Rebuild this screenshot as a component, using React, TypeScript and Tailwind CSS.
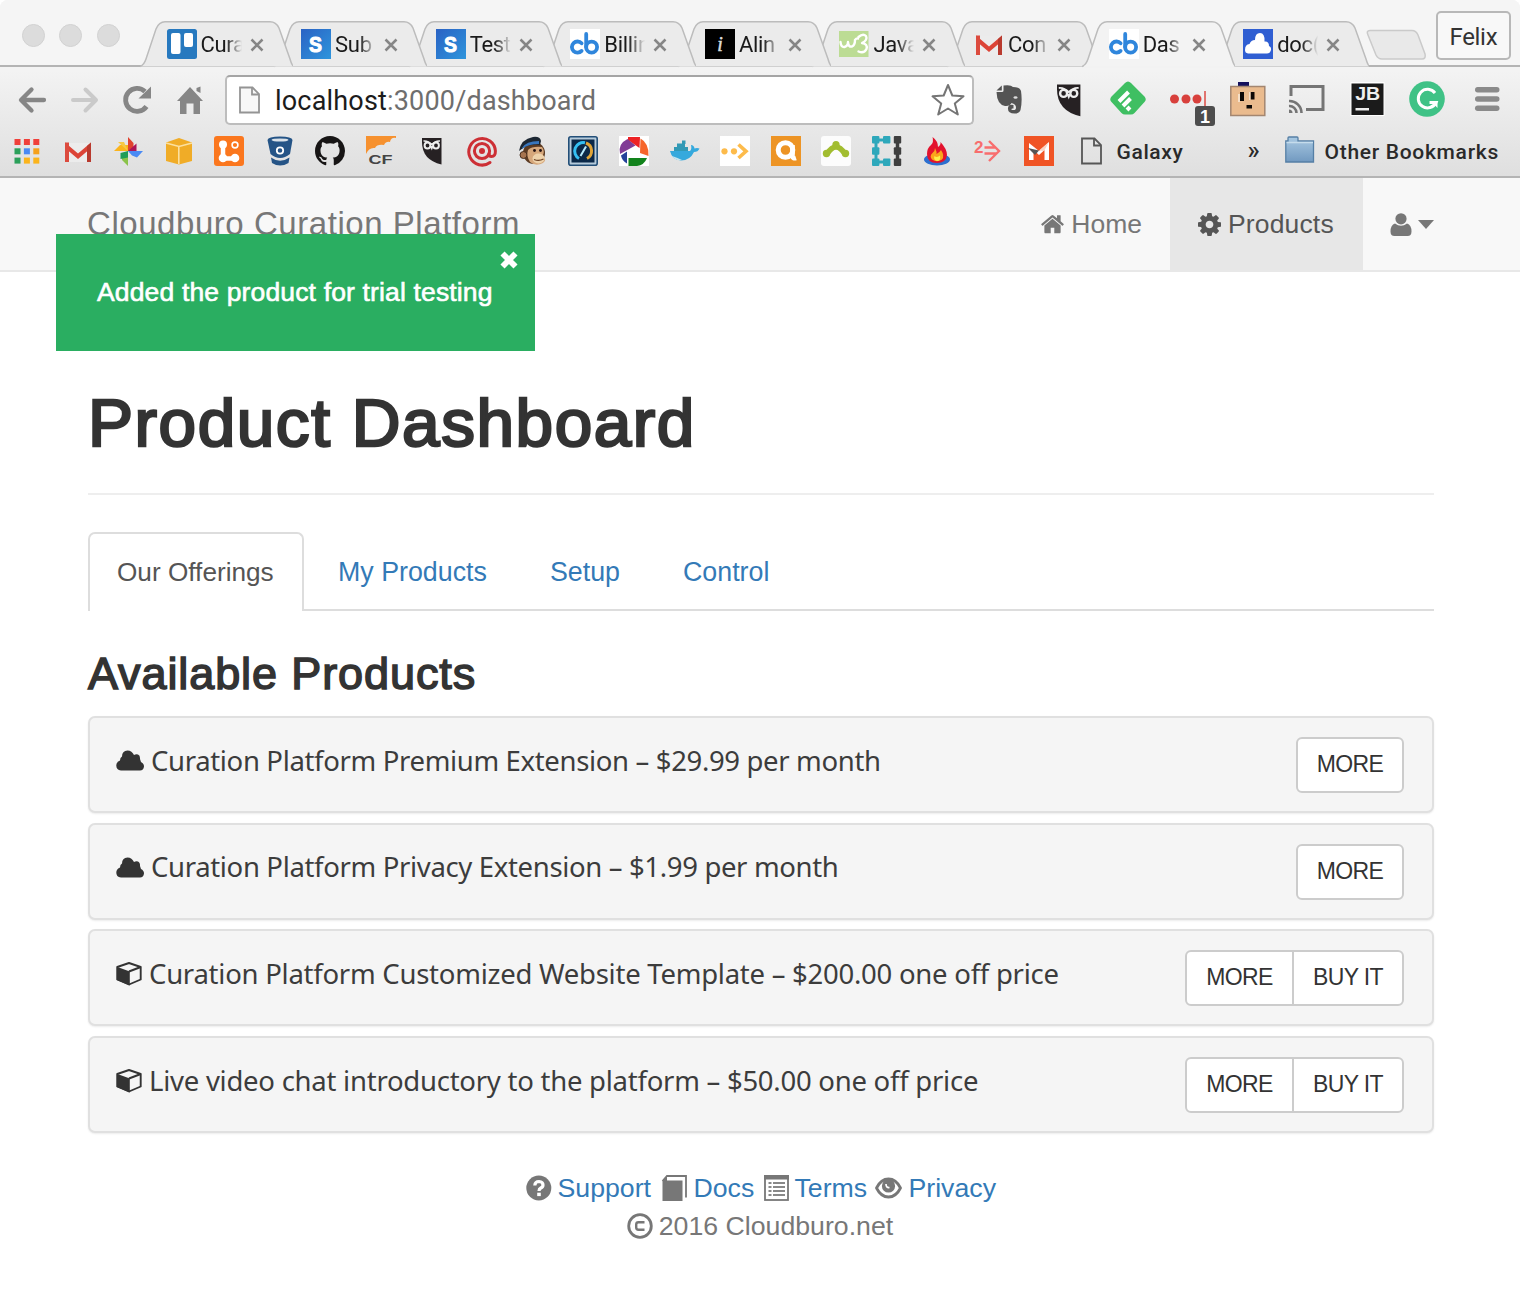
import React from "react";

type SvgProps = { children: React.ReactNode; box?: string; className?: string };

function Glyph({ children, box = "0 0 30 30", className = "h-[30px] w-[30px]" }: SvgProps) {
  return (
    <svg viewBox={box} className={`block shrink-0 overflow-visible ${className}`}>
      {children}
    </svg>
  );
}

/* ---------- favicons and bookmark logos, each on a 30 x 30 grid ---------- */

const Trello = () => (
  <Glyph>
    <rect width="30" height="30" rx="2.5" fill="#2779bf" />
    <rect x="4" y="4" width="9.5" height="21" rx="2" fill="#fff" />
    <rect x="17" y="4" width="9" height="14" rx="2" fill="#fff" />
  </Glyph>
);

const StripeS = () => (
  <Glyph>
    <defs>
      <linearGradient id="stripe" x1="0" y1="0" x2="1" y2="1">
        <stop offset="0" stopColor="#2a62c4" />
        <stop offset="1" stopColor="#2e95dc" />
      </linearGradient>
    </defs>
    <rect width="30" height="30" fill="url(#stripe)" />
    <text x="14.500" y="22.500" textAnchor="middle" textLength="13" lengthAdjust="spacingAndGlyphs" fontFamily="Liberation Sans, sans-serif" fontWeight="700" fontSize="22" fill="#fff" stroke="#fff" strokeWidth="1">
      S
    </text>
  </Glyph>
);

const Cb = () => (
  <Glyph>
    <rect width="30" height="30" fill="#fff" />
    <g fill="none" stroke="#2f86dc" strokeWidth="3.8" strokeLinecap="round">
      <path d="M11.6 14.3 A5.6 5.6 0 1 0 11.6 21.9" />
      <path d="M16.2 5V18" />
      <circle cx="21.6" cy="18.1" r="5.5" />
    </g>
  </Glyph>
);

const InfoBlack = () => (
  <Glyph>
    <rect width="30" height="30" fill="#000" />
    <text x="15" y="21.500" textAnchor="middle" fontFamily="Liberation Serif, serif" fontStyle="italic" fontSize="20" fill="#ddd" stroke="#ddd" strokeWidth=".5">
      i
    </text>
  </Glyph>
);

const W3 = () => (
  <Glyph>
    <rect y="2" width="29.5" height="26" fill="#bcdc94" />
    <g fill="none" stroke="#fff" strokeWidth="2.4" strokeLinecap="round" strokeLinejoin="round">
      <path d="M1.500 13 Q2 18.500 5.500 18 Q9 17 9 13 Q9.500 18.500 13 17.500 Q16 16 16 11 Q17.500 9 19 9.500" />
      <path d="M19.500 8 Q24 4 27 7 Q29 11 23 14 Q29 15 27.500 20 Q25 25 19.500 22.500" />
    </g>
  </Glyph>
);

const Gmail = () => (
  <Glyph>
    <path d="M2 7 H28 V26 H2Z" fill="#ececec" />
    <path d="M2 6.500 L15 17.500 L28 6.500 V12 L15 23 L2 12Z" fill="#dc4437" />
    <path d="M2 6.500 H6 V26 H2Z" fill="#dc4b3e" />
    <path d="M24 10 L28 6.500 V26 H24Z" fill="#b93a2e" />
  </Glyph>
);

const CloudFav = () => (
  <Glyph>
    <rect width="30" height="30" fill="#2f5ed2" />
    <path d="M5 24.500 Q2 24 2 21 Q2 15.500 6.500 15 Q8 11 12 11 Q12 4 17 4 Q22 4 21.500 12.500 Q26 12 26 17 Q28.500 18 28 21 Q27 24.500 24 24.500Z" fill="#fff" />
  </Glyph>
);

const Apps = () => {
  const colors = ["#f0403a", "#f0403a", "#f0403a", "#2ba05a", "#4a8af4", "#f5a11c", "#2ba05a", "#fbb41c", "#fbb41c"];
  return (
    <Glyph>
      {colors.map((c, i) => (
        <rect key={i} x={2.5 + (i % 3) * 9.4} y={3 + Math.floor(i / 3) * 9.3} width="6" height="6" fill={c} />
      ))}
    </Glyph>
  );
};

const Photos = () => (
  <Glyph>
    <path d="M15 1 L20.500 7 V15 H15Z" fill="#e0432f" />
    <path d="M15 15 L23.500 7.500 V15Z" fill="#ad1457" />
    <path d="M1 15 L7 9 L15 9 V15Z" fill="#fbb41c" />
    <path d="M5 6 H11 L15 15Z" fill="#f6c945" />
    <path d="M15 15 H30 L24 21.500 L19 19.500Z" fill="#4a8af4" />
    <path d="M15 15 V30 L9 24 V20Z" fill="#8bc34a" />
    <path d="M15 15 V21.500 L7.500 23 V17Z" fill="#1f9d58" />
  </Glyph>
);

const AwsCube = () => (
  <Glyph>
    <path d="M2 6.500 L15 2 L28 6.500 V25 L15 28.500 L2 25Z" fill="#f0ac27" />
    <path d="M2 7 L15 10.500 L28 7 M14.800 10.500 V28" stroke="#fbe0a0" strokeWidth="1.600" fill="none" />
  </Glyph>
);

const OrangeNodes = () => (
  <Glyph>
    <rect width="30" height="30" rx="3" fill="#fb771e" />
    <g stroke="#fff" strokeWidth="4.500">
      <path d="M9 9 V22.500 H21" fill="none" />
    </g>
    <circle cx="9" cy="8.500" r="4" fill="#fff" />
    <circle cx="9" cy="22" r="4.300" fill="#fff" />
    <circle cx="21" cy="22" r="4.300" fill="#fff" />
    <circle cx="21" cy="9" r="2.900" fill="none" stroke="#fff" strokeWidth="1.600" />
  </Glyph>
);

const Bucket = () => (
  <Glyph>
    <path d="M2.500 4 Q3 .5 15 .5 Q27 .5 27.500 4 L25 18 Q15 26 5.500 18Z" fill="#255486" />
    <ellipse cx="15" cy="4" rx="8.500" ry="1.600" fill="#d9e1e8" />
    <path d="M6 21.500 Q15 28 24.500 21.500 L23.500 27 Q15 32 7 27Z" fill="#255486" />
    <circle cx="15" cy="14.500" r="3.200" fill="#255486" stroke="#fff" strokeWidth="1.800" />
  </Glyph>
);

const GitHub = () => (
  <Glyph box="0 0 16 16">
    <path
      fill="#171515"
      d="M8 0C3.580 0 0 3.580 0 8c0 3.540 2.290 6.530 5.470 7.590.4.070.55-.17.55-.38 0-.19-.01-.82-.01-1.490-2.010.37-2.530-.49-2.690-.94-.09-.23-.48-.94-.82-1.130-.28-.15-.68-.52-.01-.53.63-.01 1.080.58 1.230.82.72 1.210 1.870.87 2.330.66.07-.52.28-.87.51-1.070-1.780-.2-3.640-.89-3.640-3.950 0-.87.31-1.590.82-2.150-.08-.2-.36-1.020.08-2.120 0 0 .67-.21 2.200.82.64-.18 1.320-.27 2-.27s1.360.09 2 .27c1.530-1.040 2.200-.82 2.200-.82.44 1.100.16 1.920.08 2.120.51.56.82 1.270.82 2.150 0 3.070-1.870 3.750-3.650 3.950.29.25.54.73.54 1.480 0 1.070-.01 1.930-.01 2.200 0 .21.15.46.55.38A8.010 8.010 0 0 0 16 8c0-4.420-3.580-8-8-8z"
    />
  </Glyph>
);

const Cloudflare = () => (
  <Glyph>
    <path d="M0 0 H30 V2 Q25 1 24 6 Q20 5 18 9 Q11 8 9 12 Q3 11 0 18Z" fill="#f6912f" />
    <text x="2.500" y="28" textLength="24" lengthAdjust="spacingAndGlyphs" fontFamily="Liberation Sans, sans-serif" fontWeight="700" fontSize="13.500" fill="#444">
      CF
    </text>
  </Glyph>
);

const Owl = ({ className }: { className?: string }) => (
  <Glyph className={className}>
    <path d="M5 2 H24.500 V28.500 Q5 24 5 6Z" fill="#262123" />
    <path d="M6.500 5 Q11 4.500 14.800 8.500 Q18.500 4.500 23 5" fill="none" stroke="#eee" strokeWidth="1.500" />
    <circle cx="10.500" cy="9.500" r="2.900" fill="#262123" stroke="#eee" strokeWidth="2" />
    <circle cx="19" cy="9.500" r="2.900" fill="#262123" stroke="#eee" strokeWidth="2" />
    <path d="M13 10 H16.600 L14.800 14.500Z" fill="#eee" />
  </Glyph>
);

const AtRed = () => (
  <Glyph>
    <g fill="none" stroke="#cd2f35" strokeWidth="3" strokeLinecap="round">
      <path d="M23 26.500 A13.300 13.300 0 1 1 28.400 15 Q28.500 20.500 24.500 20.500 Q22 20.500 22 17.500" />
      <circle cx="15" cy="15" r="7.600" />
    </g>
    <circle cx="15" cy="15" r="3" fill="#cd2f35" />
  </Glyph>
);

const Monkey = () => (
  <Glyph>
    <circle cx="16" cy="17" r="11" fill="#5b3a22" />
    <circle cx="5.500" cy="19" r="3.500" fill="#a7744f" stroke="#4a2f1d" />
    <path d="M10 14 Q14 10 24 11 Q27 15 25 19 Q29 24 25 27 Q18 31 12 26 Q8 20 10 14Z" fill="#d6a77b" />
    <ellipse cx="20.500" cy="22.500" rx="6" ry="5" fill="#eed2ab" />
    <path d="M16 23.500 Q21 25.500 25.500 23" stroke="#6b4023" strokeWidth="1.200" fill="none" />
    <circle cx="16.500" cy="14.500" r="1.400" fill="#211" />
    <circle cx="22.500" cy="14.500" r="1.400" fill="#211" />
    <path d="M1 15 Q3 3 15 1 Q22 0 23 5 L22 9 Q11 7 1 15Z" fill="#1d2733" />
    <path d="M4 12 Q8 5 21 5 L21 8 Q10 8 4 13Z" fill="#3976bd" />
  </Glyph>
);

const Gauge = () => (
  <Glyph>
    <rect x=".8" y=".8" width="28.400" height="28.400" rx="2" fill="#b5cada" stroke="#234f78" strokeWidth="1.600" />
    <rect x="3.500" y="3.500" width="23" height="23" fill="#0b2848" />
    <path d="M11 22.500 A8.500 8.500 0 0 1 17 6.800" fill="none" stroke="#35bff2" strokeWidth="3" />
    <path d="M18 7 A8.500 8.500 0 0 1 19 22.500" fill="none" stroke="#e0a437" strokeWidth="3" />
    <path d="M12.500 20 L18 10.500" stroke="#b9ecff" strokeWidth="2" />
  </Glyph>
);

const Picasa = () => (
  <Glyph>
    <rect width="30" height="30" fill="#fff" />
    <path d="M9 1 L21 1 L20.500 12 L9 4Z" fill="#ed2224" />
    <path d="M21.500 2.500 Q30 7 29.500 20 L21 17Z" fill="#f6662b" />
    <path d="M8.500 3 L16.500 9.500 L1 18 Q-1.500 8 8.500 3Z" fill="#813c96" />
    <path d="M2 19.500 L8 15.500 V27.500 Q3 25 2 19.500Z" fill="#23419a" />
    <path d="M9.500 22 H28 Q25 29.500 18 30 H9.500Z" fill="#12831c" />
  </Glyph>
);

const Docker = () => (
  <Glyph>
    <path d="M0 15 H20 Q22 13 21 9 Q24 9 24.500 12.500 Q27 11.500 29.500 12.500 Q28 16 24 16 Q20 24.500 11 24.500 Q2 24 0 15Z" fill="#35a9dd" />
    <path d="M4 11 H18 V15 H4Z M7 7.500 H15 V11 H7Z M12 4.500 H15.500 V8 H12Z" fill="#3199b5" />
    <path d="M2 20 Q8 22 12 24 Q5 25 2 20Z" fill="#c7e6ef" />
  </Glyph>
);

const DotsArrow = () => (
  <Glyph>
    <rect width="30" height="30" fill="#fff" />
    <circle cx="4.500" cy="15.300" r="3.100" fill="#fdbb4b" />
    <circle cx="14" cy="15.300" r="3.100" fill="#fdbb4b" />
    <path d="M18.500 8.500 L26 15.300 L18.500 22" fill="none" stroke="#fdbb4b" strokeWidth="3.600" />
  </Glyph>
);

const OrangeA = () => (
  <Glyph>
    <rect width="30" height="30" fill="#ed9425" />
    <circle cx="14.500" cy="14" r="7.300" fill="none" stroke="#fff" strokeWidth="5" />
    <path d="M21.500 9 V20.500 Q22 23 25 22" fill="none" stroke="#fff" strokeWidth="4.600" />
  </Glyph>
);

const GreenArc = () => (
  <Glyph>
    <rect width="30" height="30" rx="3" fill="#fcfcfc" />
    <path d="M6 18 Q15 4 24 18" fill="none" stroke="#a2bd30" strokeWidth="5.500" />
    <circle cx="5.500" cy="17.500" r="3.700" fill="#a2bd30" />
    <circle cx="24.500" cy="17.500" r="3.700" fill="#a2bd30" />
    <circle cx="15" cy="8.500" r="3.600" fill="#a2bd30" />
  </Glyph>
);

const Boxes = () => (
  <Glyph>
    <path d="M4 4 H16 M4 4 V26 H16" stroke="#2ea8bb" strokeWidth="3" fill="none" />
    <path d="M25.500 3 V27" stroke="#3f3f3f" strokeWidth="3.500" />
    {[0, 11.3, 22.6].map((y) => (
      <g key={y}>
        <rect x="0" y={y} width="7.400" height="7.400" rx="1" fill="#2ea8bb" />
        <rect x="21.800" y={y} width="7.400" height="7.400" rx="1" fill="#3f3f3f" />
      </g>
    ))}
    <rect x="11" y="0" width="7.400" height="7.400" rx="1" fill="#2ea8bb" />
    <rect x="11" y="22.600" width="7.400" height="7.400" rx="1" fill="#2ea8bb" />
  </Glyph>
);

const Flame = () => (
  <Glyph>
    <ellipse cx="15" cy="23.500" rx="13" ry="6" fill="#2d6fcf" />
    <path d="M10.500 1 Q16 5 16 11 Q19 9 18.500 6 Q25 13 25 19 Q24 27 15 27 Q5 27 5 18 Q5 12 9 9 Q12 6 10.500 1Z" fill="#e3122d" />
    <path d="M13 12 Q15 16 14.500 18 Q18 16 19 14 Q23 20 20 23.500 Q15 27 10 23.500 Q7 20 10.500 17 Q13 15 13 12Z" fill="#fba51c" />
    <path d="M12.500 20 Q15 22 18 19.500 Q19 25 15 25 Q11 24 12.500 20Z" fill="#fdee49" />
  </Glyph>
);

const TwoArrow = () => (
  <Glyph>
    <text x="1" y="17" fontFamily="Liberation Sans, sans-serif" fontWeight="700" fontSize="17" fill="#f86d6d">
      2
    </text>
    <path d="M11.500 11.500 H22 M11.500 17.500 H23 M16 5 L26 15 L16 25" fill="none" stroke="#f86d6d" strokeWidth="2.400" />
  </Glyph>
);

const OrangeM = () => (
  <Glyph>
    <rect width="30" height="30" fill="#f05425" />
    <path d="M5 24 V7 L15 15 L25 6 V24 H20.500 V14 L15 19 L9.500 14 V24Z" fill="#fff" />
    <path d="M4 12 L15 14.500 L11 19Z" fill="#555" />
    <path d="M15 14.500 L25 6 L20 15Z" fill="#fbd2c2" />
  </Glyph>
);

const FileOutline = ({ light = false }: { light?: boolean }) => (
  <Glyph>
    <path d="M6 2.500 H18.500 L25 9 V27.500 H6Z" fill={light ? "#f8f8f8" : "none"} stroke={light ? "#949494" : "#565656"} strokeWidth="1.800" />
    <path d="M18 3 V9.500 H24.500" fill="none" stroke={light ? "#949494" : "#565656"} strokeWidth="1.800" />
  </Glyph>
);

const Folder = () => (
  <Glyph>
    <defs>
      <linearGradient id="folder" x1="0" y1="0" x2="0" y2="1">
        <stop offset="0" stopColor="#a9c9e2" />
        <stop offset="1" stopColor="#7199c0" />
      </linearGradient>
    </defs>
    <path d="M3 5 V2 Q3 1 4 1 H12 Q13 1 13 2 V5 H28.500 V26 H.8 V5Z" fill="url(#folder)" stroke="#557fa5" strokeWidth="1.300" />
    <path d="M1.500 6.500 H28" stroke="#c5dcec" strokeWidth="1.300" />
  </Glyph>
);

/* ---------- toolbar icons, each on a 36 x 36 grid ---------- */

const big = "h-[36px] w-[36px]";
const box36 = "0 0 36 36";

const Evernote = () => (
  <Glyph box={box36} className={big}>
    <path d="M5.500 11 H11 Q12.500 11 12.500 9.500 V4.500 Q20 3.500 22 6 Q29 6 30 10 Q31.500 20 29.500 29 Q28.500 32.500 23.500 32.500 Q16.500 32.500 17 27 Q17.500 23 22.500 24 V27.500 Q20 27 20.500 28.800 Q25 30 25 26.500 Q25 23 20.500 22 Q19 25.500 14 25 Q6 23.500 5.500 11Z" fill="#545454" />
    <path d="M10.800 4.500 V9.500 H5.500Z" fill="#545454" />
    <ellipse cx="24.500" cy="16.500" rx="2" ry="1.300" fill="#ddd" />
  </Glyph>
);

const Feedly = () => (
  <Glyph box={box36} className={big}>
    <path d="M15 2 Q18 -1 21 2 L34.500 15.500 Q37 18.500 34.500 21 L24.500 32 Q23 33.500 21 33.500 H15 Q13 33.500 11.500 32 L1.500 21 Q-1 18.500 1.500 15.500Z" fill="#3fbf62" />
    <path d="M9 20.500 L18.500 11 M13 25 L20.500 17.500 M17 29 L20 26" stroke="#fff" strokeWidth="4" />
  </Glyph>
);

const LastPass = () => (
  <Glyph box={box36} className={big}>
    <circle cx="4.500" cy="18" r="4.500" fill="#d8403c" />
    <circle cx="16" cy="18" r="4.500" fill="#d8403c" />
    <circle cx="27" cy="18" r="4.500" fill="#d8403c" />
    <rect x="34" y="10" width="2" height="19" fill="#e0746f" />
    <rect x="25" y="25" width="20" height="20" rx="3" fill="#4d4d4d" />
    <text x="35" y="41.500" textAnchor="middle" fontFamily="Liberation Sans, sans-serif" fontWeight="700" fontSize="18" fill="#fff">
      1
    </text>
  </Glyph>
);

const BoxFace = () => (
  <Glyph box={box36} className={big}>
    <rect x="8" y="1" width="11" height="6" fill="#15105c" />
    <rect x=".8" y="5.500" width="34" height="29" fill="#eabb8e" stroke="#a38670" strokeWidth="1.500" />
    <path d="M10 11 H14 V20 H10Z M20.500 11 H24.500 V18.500 H20.500Z M16.500 24 H22 V27.500 H16.500Z" fill="#0c0806" />
    <path d="M8 13 H10 V21 H8Z M19 11 H20.500 V19 H19Z" fill="#f5dfc8" />
  </Glyph>
);

const Cast = () => (
  <Glyph box={box36} className={big}>
    <path d="M2 15 V5.500 H34 V28.500 H17" fill="none" stroke="#757575" strokeWidth="3" />
    <g fill="none" stroke="#757575" strokeWidth="2.600">
      <path d="M0 20 A12 12 0 0 1 12.500 32" />
      <path d="M0 25 A7 7 0 0 1 7.500 32" />
    </g>
    <path d="M0 28.500 A3.500 3.500 0 0 1 3.500 32 H0Z" fill="#757575" />
  </Glyph>
);

const JetBrains = () => (
  <Glyph box={box36} className={big}>
    <rect x="1.500" y="1" width="34" height="34" fill="#fff" />
    <rect x="2.500" y="2.500" width="32" height="31.500" fill="#1b1b1b" />
    <text x="18.700" y="19" textAnchor="middle" textLength="25" lengthAdjust="spacingAndGlyphs" fontFamily="Liberation Sans, sans-serif" fontWeight="700" fontSize="18.500" fill="#eee">
      JB
    </text>
    <rect x="6.500" y="27" width="13.500" height="2.500" fill="#eee" />
  </Glyph>
);

const Grammarly = () => (
  <Glyph box={box36} className={big}>
    <circle cx="18" cy="18" r="17.800" fill="#3fc286" />
    <path d="M26 12 A9.300 9.300 0 1 0 27 21.500 H20.500" fill="none" stroke="#fff" strokeWidth="3" />
    <path d="M22.500 20.500 H28.500 V27Z" fill="#fff" />
  </Glyph>
);

const Burger = () => (
  <Glyph box={box36} className={big}>
    {[6, 15.2, 24.5].map((y) => (
      <rect key={y} x="6" y={y} width="24.500" height="5.500" rx="2.700" fill="#8a8a8a" />
    ))}
  </Glyph>
);

const BackArrow = () => (
  <Glyph className="h-[30px] w-[30px]">
    <path d="M14.500 4.500 L4 15 L14.500 25.500 M4.500 15 H27" fill="none" stroke="#868686" strokeWidth="4.300" strokeLinecap="round" strokeLinejoin="round" />
  </Glyph>
);

const ForwardArrow = () => (
  <Glyph className="h-[30px] w-[30px]">
    <path d="M15.500 4.500 L26 15 L15.500 25.500 M25 15 H3" fill="none" stroke="#cacaca" strokeWidth="4" strokeLinecap="round" strokeLinejoin="round" />
  </Glyph>
);

const Reload = () => (
  <Glyph className="h-[30px] w-[30px]">
    <path d="M24.500 21.500 A11.500 11.500 0 1 1 23 6.500" fill="none" stroke="#868686" strokeWidth="4.800" />
    <path d="M29 1.500 V13.500 H16.500Z" fill="#868686" />
  </Glyph>
);

const ToolbarHome = () => (
  <Glyph className="h-[30px] w-[30px]">
    <path d="M2 16 L15 2 L28 16 H25 V29 H18.500 V18.500 H11.500 V29 H5 V16Z" fill="#868686" />
    <path d="M21.500 3 L25.500 1.500 V8 L21.500 6Z" fill="#868686" />
  </Glyph>
);

/* ---------- page icons ---------- */

const HomeIcon = () => (
  <Glyph box="80 220 1632 1330" className="h-[20px] w-[23px]">
    <path
      fill="#777"
      d="M1472 992v480q0 26-19 45t-45 19h-384v-384h-256v384h-384q-26 0-45-19t-19-45v-480q0-1 .5-3t.5-3l575-474 575 474q1 2 1 6zm223-69l-62 74q-8 9-21 11h-3q-13 0-21-7l-692-577-692 577q-12 8-24 7-13-2-21-11l-62-74q-8-10-7-23.500t11-21.500l719-599q32-26 76-26t76 26l244 204v-195q0-14 9-23t23-9h192q14 0 23 9t9 23v408l219 182q10 8 11 21.500t-7 23.500z"
    />
  </Glyph>
);

const GearIcon = () => (
  <Glyph box="128 128 1536 1536" className="h-[23px] w-[23px]">
    <path
      fill="#555"
      d="M1152 896q0-106-75-181t-181-75-181 75-75 181 75 181 181 75 181-75 75-181zm512-109v222q0 12-8 23t-20 13l-185 28q-19 54-39 91 35 50 107 138 10 12 10 25t-9 23q-27 37-99 108t-94 71q-12 0-26-9l-138-108q-44 23-91 38-16 136-29 186-7 28-36 28h-222q-14 0-24.500-8.500t-11.500-21.500l-28-184q-49-16-90-37l-141 107q-10 9-25 9-14 0-25-11-126-114-165-168-7-10-7-23 0-12 8-23 15-21 51-66.500t54-70.500q-27-50-41-99l-183-27q-13-2-21-12.500t-8-23.500v-222q0-12 8-23t19-13l186-28q14-46 39-92-40-57-107-138-10-12-10-24 0-10 9-23 26-36 98.500-107.500t94.500-71.500q13 0 26 10l138 107q44-23 91-38 16-136 29-186 7-28 36-28h222q14 0 24.500 8.500t11.500 21.500l28 184q49 16 90 37l142-107q9-9 24-9 13 0 25 10 129 119 165 170 7 8 7 22 0 12-8 23-15 21-51 66.500t-54 70.500q26 50 41 98l183 28q13 2 21 12.500t8 23.500z"
    />
  </Glyph>
);

const UserIcon = () => (
  <Glyph box="0 0 22 23" className="h-[23px] w-[22px]">
    <circle cx="11" cy="5.800" r="5.600" fill="#777" />
    <path d="M5 10.500 Q11 15 17 10.500 Q21.500 12 21.500 18.500 Q21.500 23 17.500 23 H4.500 Q.5 23 .5 18.500 Q.5 12 5 10.500Z" fill="#777" />
  </Glyph>
);

const CloudIcon = () => (
  <Glyph box="0 0 28 21" className="h-[21px] w-[28px]">
    <path d="M5 20.500 Q0 20 .3 15 Q.8 11.500 4 10.500 Q4 7.500 6 6.500 Q6 .8 11.500 .4 Q16 .5 18 5 Q20 3.800 22 4.500 Q24.300 5.500 24 9 L25 12 Q28 13.500 28 16.500 Q27.500 20.300 24 20.500Z" fill="#333" />
  </Glyph>
);

const CubeIcon = () => (
  <Glyph box="0 0 26 25" className="h-[25px] w-[26px]">
    <path d="M1.300 6 L13 2 L24.700 6 V18.500 L13 23.500 L1.300 18.500Z" fill="#f5f5f5" stroke="#333" strokeWidth="1.900" strokeLinejoin="round" />
    <path d="M.8 5.800 L13.800 10.500 V24.500 L.8 19Z" fill="#333" />
    <path d="M13 10.500 L24.800 6" stroke="#333" strokeWidth="1.900" />
  </Glyph>
);

const QuestionIcon = () => (
  <Glyph box="0 0 26 26" className="h-[26px] w-[26px]">
    <circle cx="12.800" cy="13" r="12.500" fill="#777" />
    <path d="M8.800 10.500 Q9 6.500 13 6.500 Q17 6.700 17 10 Q17 12 14.800 13 Q13 14 13 16" fill="none" stroke="#fff" strokeWidth="3.200" />
    <rect x="11.200" y="17.700" width="3.600" height="3.400" fill="#fff" />
  </Glyph>
);

const BookIcon = () => (
  <Glyph box="0 0 26 26" className="h-[26px] w-[26px]">
    <path d="M.5 6 L5 1 H24 V22.500" fill="none" stroke="#777" strokeWidth="1.800" />
    <path d="M.5 5.500 H20.500 V26 H.5Z M.5 6 L5 .5 V6Z" fill="#777" />
  </Glyph>
);

const ListIcon = () => (
  <Glyph box="0 0 26 26" className="h-[26px] w-[26px]">
    <rect x="1" y="1" width="23" height="24" fill="#fff" stroke="#777" strokeWidth="1.800" />
    <rect x="0" y="0" width="25" height="4.500" fill="#777" />
    {[8, 12, 16, 20].map((y) => (
      <path key={y} d={`M4.500 ${y} H7.500 M9 ${y} H21`} stroke="#888" strokeWidth="1.800" />
    ))}
  </Glyph>
);

const EyeIcon = () => (
  <Glyph box="0 0 27 22" className="h-[22px] w-[27px]">
    <path d="M1.500 11 Q6 2 13.500 2 Q21 2 25.500 11 Q21 20 13.500 20 Q6 20 1.500 11Z" fill="#fff" stroke="#777" strokeWidth="2.800" strokeLinejoin="round" />
    <circle cx="13.500" cy="9" r="6.600" fill="#777" />
    <path d="M11 7 Q11 11 14.500 10.500" fill="none" stroke="#fff" strokeWidth="1.700" />
  </Glyph>
);

const CopyrightIcon = () => (
  <Glyph box="0 0 26 26" className="h-[26px] w-[26px]">
    <circle cx="13" cy="13" r="11.300" fill="none" stroke="#777" strokeWidth="2.800" />
    <path d="M17.500 9.300 H11.500 Q9.200 9.300 9.200 11.500 V14.500 Q9.200 16.700 11.500 16.700 H17.500" fill="none" stroke="#777" strokeWidth="2.400" />
  </Glyph>
);

/* ---------- browser chrome ---------- */

const browserTabs = [
  { icon: <Trello />, label: "Cura" },
  { icon: <StripeS />, label: "Sub" },
  { icon: <StripeS />, label: "Test" },
  { icon: <Cb />, label: "Billin" },
  { icon: <InfoBlack />, label: "Alin" },
  { icon: <W3 />, label: "Java" },
  { icon: <Gmail />, label: "Con" },
  { icon: <Cb />, label: "Das", active: true },
  { icon: <CloudFav />, label: "doc(" },
];

const layers = ["z-[9]", "z-[8]", "z-[7]", "z-[6]", "z-[5]", "z-[4]", "z-[3]", "z-10", "z-[1]"];

function BrowserTab({ icon, label, active, layer }: { icon: React.ReactNode; label: string; active?: boolean; layer: string }) {
  return (
    <div className={`relative flex h-[46px] w-[134.600px] shrink-0 items-center pl-[27px] ${layer}`}>
      <svg viewBox="0 0 153 47" className="absolute top-0 left-0 h-[47px] w-[153px]">
        <path
          d="M0 45.500 Q4 44 6 38 L16 8 Q19 .8 25 .8 H130 Q136 .8 139 7 L150 38 Q152 45 154 45.500"
          fill={active ? "#f3f3f3" : "#ebebeb"}
          stroke="#bcbcbc"
          strokeWidth="1.500"
        />
        {active && <path d="M2 46 H152" stroke="#f2f2f2" strokeWidth="2.500" />}
      </svg>
      <div className="relative flex items-center">
        {icon}
        <span className="ml-[4px] w-[49px] pt-px text-[22px] leading-[28px] tracking-[-0.3px] whitespace-nowrap text-[#1a1a1a] [mask-image:linear-gradient(to_right,#000_50%,transparent_84%)]">
          {label}
        </span>
        <svg viewBox="0 0 14 14" className="mt-px h-[14px] w-[14px]">
          <path d="M1.500 1.500 L12.500 12.500 M12.500 1.500 L1.500 12.500" stroke="#868686" strokeWidth="2.500" />
        </svg>
      </div>
    </div>
  );
}

function TabStrip() {
  return (
    <div className="relative flex h-[67px] items-start border-b-2 border-[#b4b4b4] bg-[#f5f5f5]">
      <div className="flex w-[117.500px] gap-[14.400px] pt-[24px] pl-[22px]">
        {[0, 1, 2].map((i) => (
          <div key={i} className="h-[23px] w-[23px] shrink-0 rounded-full border border-[#d2d2d2] bg-[#dcdcdc]" />
        ))}
      </div>
      <div className="ml-[22px] flex pt-[21px]">
        {browserTabs.map((t, i) => (
          <BrowserTab key={i} {...t} layer={layers[i]} />
        ))}
      </div>
      <svg viewBox="0 0 60 32" className="mt-[29px] ml-[15px] h-[32px] w-[60px] shrink-0">
        <path d="M4 1.500 H46 Q50 1.500 52 6 L59 25 Q60 30 56 30 H16 Q12 30 10 26 L2 6 Q0 1.500 4 1.500Z" fill="#e9e9e9" stroke="#cacaca" strokeWidth="1.500" />
      </svg>
      <div className="mt-[11px] ml-[10px] flex h-[49px] w-[75px] shrink-0 items-center justify-center rounded-[5px] border-2 border-[#b8b8b8] bg-[#f8f8f8] pt-[2px] text-[24px] tracking-[-0.3px] text-[#333]">
        Felix
      </div>
    </div>
  );
}

function Toolbar() {
  return (
    <div className="flex h-[66px] items-center">
      <div className="flex w-[225px] gap-[22.500px] pl-[17px]">
        <BackArrow />
        <ForwardArrow />
        <Reload />
        <ToolbarHome />
      </div>
      <div className="flex h-[50px] w-[749px] shrink-0 items-center rounded-[5px] border-2 border-[#bdbdbd] border-t-[#a5a5a5] bg-white pr-[7px] pl-[7px]">
        <FileOutline light />
        <span className="ml-[11px] pt-[2px] text-[27px] tracking-[0.180px] whitespace-nowrap text-[#6e6e6e]">
          <span className="text-[#1c1c1c]">localhost</span>:3000/dashboard
        </span>
        <svg viewBox="0 0 34 34" className="ml-auto h-[34px] w-[34px]">
          <path
            d="M17 2 L21.300 12.500 L32.500 13.300 L23.800 20.500 L26.800 31.500 L17 25.500 L7.200 31.500 L10.200 20.500 L1.500 13.300 L12.700 12.500Z"
            fill="#fff"
            stroke="#757575"
            strokeWidth="2"
            strokeLinejoin="round"
          />
        </svg>
      </div>
      <div className="ml-[17px] flex gap-[23.700px]">
        <Evernote />
        <Owl className="h-[38px] w-[36px]" />
        <Feedly />
        <LastPass />
        <BoxFace />
        <Cast />
        <JetBrains />
        <Grammarly />
        <Burger />
      </div>
    </div>
  );
}

function BookmarksBar() {
  return (
    <div className="flex h-[43px] items-center pb-[7px] pl-[12px] text-[21px] font-medium text-[#2a2a2a]">
      <div className="flex gap-[20.580px]">
        <Apps />
        <Gmail />
        <Photos />
        <AwsCube />
        <OrangeNodes />
        <Bucket />
        <GitHub />
        <Cloudflare />
        <Owl className="h-[30px] w-[30px]" />
        <AtRed />
        <Monkey />
        <Gauge />
        <Picasa />
        <Docker />
        <DotsArrow />
        <OrangeA />
        <GreenArc />
        <Boxes />
        <Flame />
        <TwoArrow />
        <OrangeM />
      </div>
      <div className="ml-[22px] flex items-center">
        <FileOutline />
        <span className="ml-[11px] w-[131px] pt-[3px] tracking-[0.6px]">Galaxy</span>
        <span className="w-[37px] text-[25px]">»</span>
        <Folder />
        <span className="ml-[10px] pt-[3px] tracking-[0.7px] whitespace-nowrap">Other Bookmarks</span>
      </div>
    </div>
  );
}

/* ---------- page ---------- */

function Navbar() {
  return (
    <nav className="relative flex h-[94px] justify-between border-b-2 border-[#e8e8e8] bg-[#f8f8f8] pr-[60px] pl-[87px] text-[26.500px] text-[#777]">
      <span className="pt-[24px] text-[33px] leading-[44px] tracking-[0.55px] whitespace-nowrap">Cloudburo Curation Platform</span>
      <div className="flex">
        <a className="flex items-center pr-[28px]">
          <HomeIcon />
          <span className="ml-[7px] pt-[2px]">Home</span>
        </a>
        <a className="flex w-[193px] items-center bg-[#e7e7e7] pl-[28px] text-[#555]">
          <GearIcon />
          <span className="ml-[7px] pt-[2px] tracking-[0.15px]">Products</span>
        </a>
        <a className="flex w-[97px] items-center pl-[27px]">
          <UserIcon />
          <svg viewBox="0 0 16 9" className="ml-[6px] h-[9px] w-[16px]">
            <path d="M0 0 H16 L8 9Z" fill="#777" />
          </svg>
        </a>
      </div>
      <div className="absolute top-[56px] left-[56px] z-20 h-[117px] w-[479px] bg-[#2aae61] pt-[42px] pl-[41px] text-[26.500px] leading-[32px] tracking-[0.15px] whitespace-nowrap text-white [-webkit-text-stroke:0.6px_white]">
        Added the product for trial testing
        <svg viewBox="0 0 20 20" className="absolute top-[16px] right-[16px] h-[20px] w-[20px]">
          <path d="M3.500 3.500 L16.500 16.500 M16.500 3.500 L3.500 16.500" stroke="#fff" strokeWidth="5.800" />
        </svg>
      </div>
    </nav>
  );
}

function PageTabs() {
  return (
    <div className="mt-[37px] flex h-[79px] border-b-2 border-[#ddd] text-[26.800px] text-[#337ab7]">
      <a className="flex h-[79px] w-[216px] items-center rounded-t-[7px] border-2 border-b-0 border-[#ddd] bg-white pl-[27px] text-[26.200px] whitespace-nowrap text-[#555]">Our Offerings</a>
      <a className="ml-[34px] flex w-[212px] items-center pt-[3px] whitespace-nowrap">My Products</a>
      <a className="flex w-[133px] items-center pt-[3px]">Setup</a>
      <a className="flex items-center pt-[3px]">Control</a>
    </div>
  );
}

function Panel({ kind, title, buy }: { kind: "cloud" | "cube"; title: string; buy?: boolean }) {
  return (
    <div className="flex h-[97px] items-start justify-between rounded-[7px] border-2 border-[#e0e0e0] bg-[#f5f5f5] pt-[19px] pr-[28px] pl-[26px] shadow-[0_1px_2px_rgba(0,0,0,0.08)]">
      <div className="flex h-[47px] items-center">
        {kind === "cloud" ? <CloudIcon /> : <CubeIcon />}
        <span
          className={`ml-[7px] font-['Noto_Sans',sans-serif] text-[27.500px] whitespace-nowrap text-[#3c3c3c] ${
            kind === "cloud" ? "tracking-[-0.340px]" : "tracking-[-0.250px]"
          }`}
        >
          {title}
        </span>
      </div>
      <div className="flex h-[56px] overflow-hidden rounded-[6px] border-2 border-[#ccc] bg-white text-[23px] text-[#333]">
        <button className={`${buy ? "w-[105px]" : "w-[104px]"} pb-[1px] tracking-[-0.6px]`}>MORE</button>
        {buy && <button className="w-[110px] border-l-2 border-[#ccc] pb-[1px] tracking-[-0.6px]">BUY IT</button>}
      </div>
    </div>
  );
}

export default function App() {
  return (
    <div className="h-[1299px] w-[1520px] overflow-hidden bg-white font-['Liberation_Sans',Arial,sans-serif]">
      <header className="overflow-hidden rounded-t-[8px] border-b-2 border-[#b4b4b4] bg-linear-to-b from-[#f3f3f3] from-40% to-[#dfdfdf] font-['Roboto',sans-serif]">
        <TabStrip />
        <Toolbar />
        <BookmarksBar />
      </header>
      <Navbar />
      <main className="ml-[88px] w-[1346px]">
        <h1 className="pt-[112px] text-[67.500px] leading-[78px] tracking-[1.550px] whitespace-nowrap text-[#333] [-webkit-text-stroke:2.500px_#333]">Product Dashboard</h1>
        <hr className="mt-[31px] border-t-2 border-[#eee]" />
        <PageTabs />
        <h3 className="mt-[36px] text-[45px] leading-[54px] tracking-[0.9px] whitespace-nowrap text-[#333] [-webkit-text-stroke:1.500px_#333]">Available Products</h3>
        <div className="mt-[15px] flex flex-col gap-[9.600px]">
          <Panel kind="cloud" title="Curation Platform Premium Extension – $29.99 per month" />
          <Panel kind="cloud" title="Curation Platform Privacy Extension – $1.99 per month" />
          <Panel kind="cube" title="Curation Platform Customized Website Template – $200.00 one off price" buy />
          <Panel kind="cube" title="Live video chat introductory to the platform – $50.00 one off price" buy />
        </div>
      </main>
      <footer className="mt-[36px] text-[26.700px] leading-[38px] text-[#777]">
        <div className="flex justify-center text-[#337ab7]">
          <a className="flex w-[136px] items-center gap-[6px]"><QuestionIcon />Support</a>
          <a className="flex w-[102px] items-center gap-[6px]"><BookIcon />Docs</a>
          <a className="flex w-[111px] items-center gap-[5px]"><ListIcon />Terms</a>
          <a className="flex w-[120px] items-center gap-[7px]"><EyeIcon />Privacy</a>
        </div>
        <div className="flex items-center justify-center gap-[6px]">
          <CopyrightIcon />
          <span>2016 Cloudburo.net</span>
        </div>
      </footer>
    </div>
  );
}
